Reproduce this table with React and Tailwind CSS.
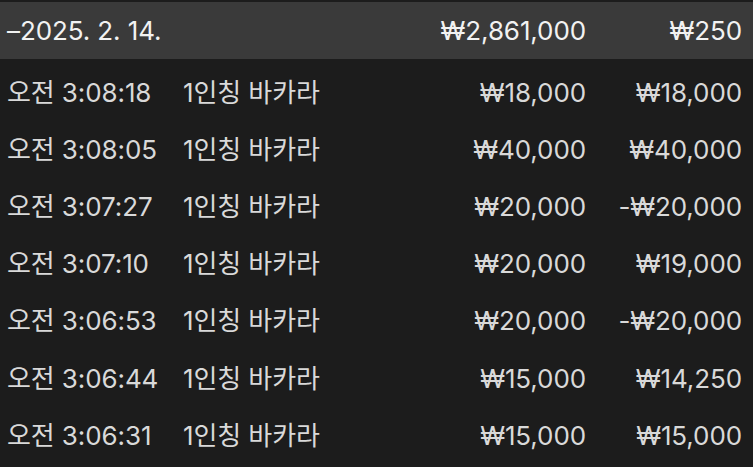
import React from 'react';

const rows = [
    { time: '오전 3:08:18', game: '1인칭 바카라', bet: '₩18,000', win: '₩18,000' },
    { time: '오전 3:08:05', game: '1인칭 바카라', bet: '₩40,000', win: '₩40,000' },
    { time: '오전 3:07:27', game: '1인칭 바카라', bet: '₩20,000', win: '-₩20,000' },
    { time: '오전 3:07:10', game: '1인칭 바카라', bet: '₩20,000', win: '₩19,000' },
    { time: '오전 3:06:53', game: '1인칭 바카라', bet: '₩20,000', win: '-₩20,000' },
    { time: '오전 3:06:44', game: '1인칭 바카라', bet: '₩15,000', win: '₩14,250' },
    { time: '오전 3:06:31', game: '1인칭 바카라', bet: '₩15,000', win: '₩15,000' },
];

const font = { fontFamily: 'Inter, "Noto Sans CJK KR", sans-serif' };

const App = () => {
    return (
        <div className="w-[753px] h-[467px] overflow-hidden bg-[#1c1c1c] pt-[2px] text-[26px] leading-[32px] tracking-[-0.1px]" style={font}>
            {/* day summary */}
            <div className="flex items-center h-[57px] bg-[#3a3a3a] text-[#f2f2f2] pl-[7px] pr-[11px]">
                <div className="flex-1">–2025. 2. 14.</div>
                <div className="text-right">₩2,861,000</div>
                <div className="w-[156px] text-right">₩250</div>
            </div>

            {rows.map((r, i) => (
                <div key={i} className="flex items-center h-[57.2px] pt-[10px] text-[#d9d9d9] pl-[7px] pr-[11px]">
                    <div className="w-[176px]">{r.time}</div>
                    <div className="flex-1">{r.game}</div>
                    <div className="text-right">{r.bet}</div>
                    <div className="w-[156px] text-right">{r.win}</div>
                </div>
            ))}
        </div>
    );
};

export default App;
